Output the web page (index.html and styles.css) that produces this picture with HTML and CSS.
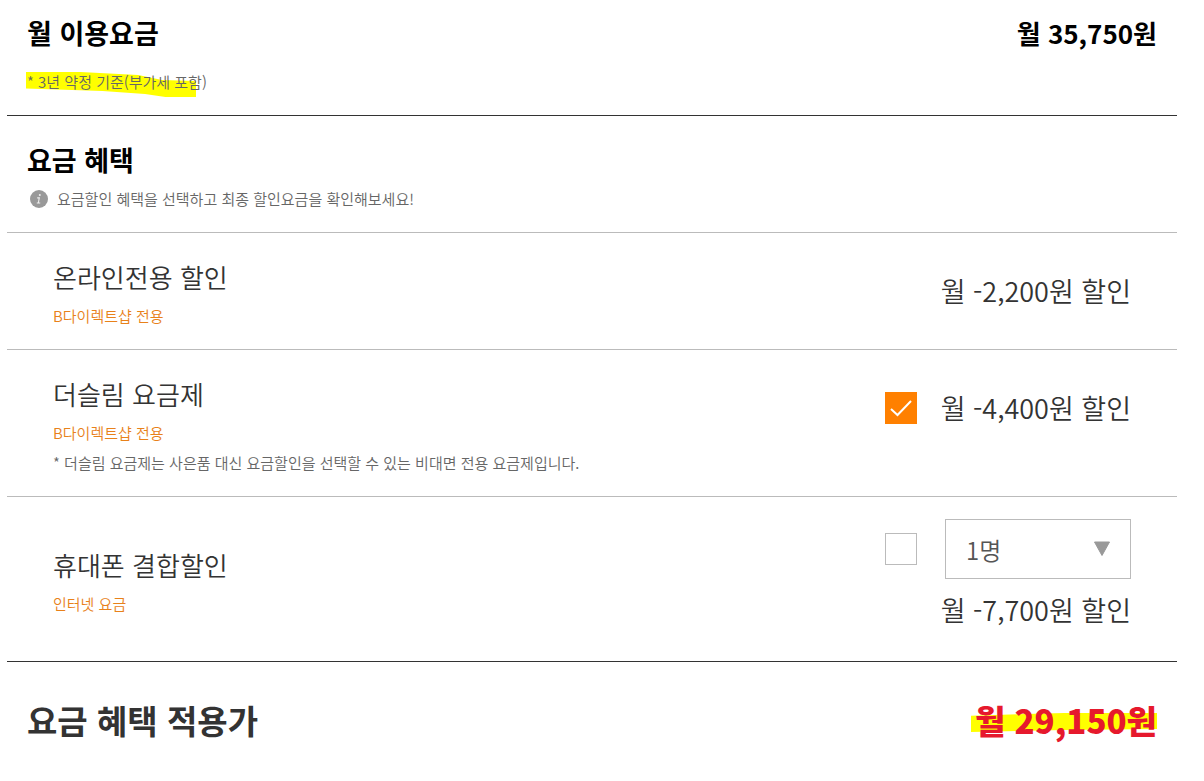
FILE: index.html
```html
<!DOCTYPE html>
<html lang="ko">
<head>
  <meta charset="utf-8">
  <title>월 이용요금</title>
  <link rel="stylesheet" href="styles.css">
</head>
<body>
<div class="bill">
  <div class="total">
    <div>
      <h2>월 이용요금</h2>
      <p class="note marked">* 3년 약정 기준(부가세 포함)</p>
    </div>
    <strong class="sum">월 35,750원</strong>
  </div>

  <div class="head">
    <h2>요금 혜택</h2>
    <p class="note info">
      <svg class="ico" viewBox="0 0 18 18" aria-hidden="true">
        <circle cx="9" cy="9" r="9" fill="#999"/>
        <circle cx="9.8" cy="4.9" r="1" fill="#eee"/>
        <path d="M7.2 7.9h2.1L8.3 13M6.8 13h3.4" fill="none" stroke="#eee" stroke-width="1.1"/>
      </svg>
      요금할인 혜택을 선택하고 최종 할인요금을 확인해보세요!
    </p>
  </div>

  <div class="row">
    <div class="name">
      <h3>온라인전용 할인</h3>
      <p class="tag">B다이렉트샵 전용</p>
    </div>
    <div class="benefit">
      <span class="price">월 -2,200원 할인</span>
    </div>
  </div>

  <div class="row">
    <div class="name">
      <h3><label for="slim">더슬림 요금제</label></h3>
      <p class="tag">B다이렉트샵 전용</p>
      <p class="note desc">* 더슬림 요금제는 사은품 대신 요금할인을 선택할 수 있는 비대면 전용 요금제입니다.</p>
    </div>
    <div class="benefit">
      <span class="check">
        <input type="checkbox" id="slim" checked>
        <svg viewBox="0 0 32 32" aria-hidden="true"><path d="M6 17l6.500 6L26 9" fill="none" stroke="#fff" stroke-width="2"/></svg>
      </span>
      <span class="price">월 -4,400원 할인</span>
    </div>
  </div>

  <div class="row combine">
    <div class="name">
      <h3><label for="mobile">휴대폰 결합할인</label></h3>
      <p class="tag">인터넷 요금</p>
    </div>
    <div class="benefit">
      <span class="check"><input type="checkbox" id="mobile"></span>
      <div class="pick">
        <div class="drop">
          <select aria-label="결합 인원">
            <option>1명</option>
            <option>2명</option>
            <option>3명</option>
          </select>
          <svg viewBox="0 0 18 16" aria-hidden="true"><path d="M1.500 1h15L9 14.500z" fill="#999" stroke="#999" stroke-linejoin="round"/></svg>
        </div>
        <span class="price">월 -7,700원 할인</span>
      </div>
    </div>
  </div>

  <div class="final">
    <h2>요금 혜택 적용가</h2>
    <strong class="marked">월 29,150원</strong>
  </div>
</div>
</body>
</html>
```
FILE: styles.css
```css
* {
  box-sizing: border-box;
}

body {
  margin: 0;
  background: #fff;
  color: #333;
  font-family: "Noto Sans CJK KR", "Noto Sans", sans-serif;
}

h2, h3, p {
  margin: 0;
}

.bill {
  margin: 0 27px 0 7px;
}

.total, .head {
  padding: 16px 20px 21px;
  color: #000;
}

.total {
  display: flex;
  justify-content: space-between;
  border-bottom: 1px solid #333;
}

.total .note {
  margin-top: 20px;
}

.head {
  padding-top: 27px;
  border-bottom: 1px solid #bbb;
}

.total h2, .head h2, .sum {
  font-size: 27px;
  font-weight: 700;
  line-height: 34px;
}

.total .sum {
  font-size: 26px;
}

.note, .tag {
  font-size: 15px;
  font-weight: 350;
  line-height: 24px;
}

.note {
  color: #666;
}

.tag {
  margin-top: 10px;
  color: #e8811a;
}

.info {
  display: flex;
  align-items: center;
  gap: 9px;
  margin-top: 10px;
  padding-left: 3px;
}

.ico {
  width: 18px;
  height: 18px;
}

.desc {
  margin-top: 6px;
}

/* highlighter strokes */
.marked {
  position: relative;
  z-index: 0;
  width: max-content;
}

.marked::before {
  content: "";
  position: absolute;
  z-index: -1;
  background: #ff0;
}

.total .marked::before {
  top: 2px;
  left: -1px;
  width: 170px;
  height: 25px;
  clip-path: polygon(0 0, 32% 0, 66% 12%, 80% 32%, 100% 36%, 100% 100%, 82% 100%, 70% 88%, 45% 76%, 0 66%);
}

.row {
  display: flex;
  justify-content: space-between;
  padding: 0 46px;
  border-bottom: 1px solid #bbb;
}

.name {
  padding: 27px 0 21px;
}

.name h3 {
  font-size: 26px;
  font-weight: 350;
  line-height: 34px;
}

.benefit {
  display: flex;
  align-items: flex-start;
  gap: 20px;
  padding-top: 41px;
}

.price {
  min-width: 194px;
  font-size: 27px;
  font-weight: 350;
  line-height: 34px;
  text-align: right;
  white-space: nowrap;
}

.check {
  position: relative;
  width: 32px;
  height: 32px;
  margin-top: 1px;
}

.check input {
  display: block;
  width: 32px;
  height: 32px;
  margin: 0;
  appearance: none;
  border: 1px solid #bbb;
  background: #fff;
}

.check input:checked {
  border-color: #ff8000;
  background: #ff8000;
}

.check svg {
  position: absolute;
  inset: 0;
  pointer-events: none;
}

.combine {
  align-items: center;
  padding-top: 22px;
  padding-bottom: 17px;
  border-bottom-color: #333;
}

.combine .name {
  padding: 0;
}

.combine .benefit {
  padding: 0 0 17px;
}

.combine .check {
  margin-top: 14px;
}

.pick {
  display: flex;
  flex-direction: column;
  align-items: flex-end;
  gap: 14px;
}

.drop {
  position: relative;
  width: 186px;
}

.drop select {
  display: block;
  width: 100%;
  height: 60px;
  padding: 0 20px;
  appearance: none;
  border: 1px solid #bbb;
  border-radius: 0;
  background: #fff;
  color: #555;
  font-family: inherit;
  font-size: 24px;
  font-weight: 350;
}

.drop svg {
  position: absolute;
  top: 22px;
  right: 20px;
  width: 18px;
  height: 16px;
  pointer-events: none;
}

.final {
  display: flex;
  justify-content: space-between;
  padding: 36px 20px 38px;
}

.final h2, .final strong {
  font-size: 33px;
  font-weight: 700;
  line-height: 44px;
}

.final strong {
  color: #e6192d;
  font-weight: 900;
}

.final .marked::before {
  top: 15px;
  left: -4px;
  right: 0;
  height: 19px;
  clip-path: polygon(0 14%, 50% 0, 100% 0, 100% 84%, 50% 90%, 0 100%);
}
```
